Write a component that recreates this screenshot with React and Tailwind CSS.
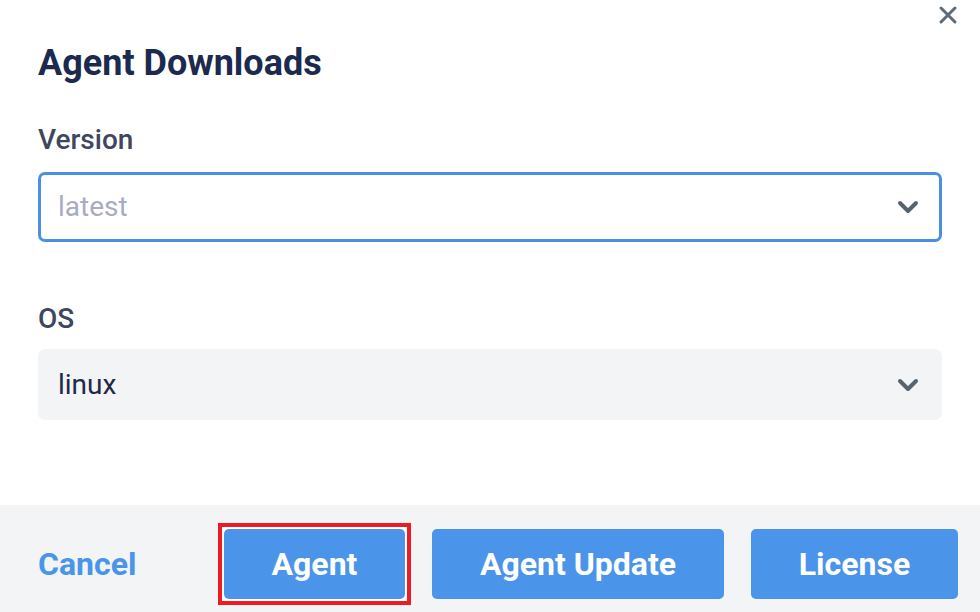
const Chevron = () => (
  <svg width="22" height="14" viewBox="0 0 22 14" className="shrink-0">
    <path d="M3 3 L11 11 L19 3" fill="none" stroke="#56646f" strokeWidth="4" strokeLinecap="round" strokeLinejoin="round" />
  </svg>
);

const buttonClasses =
  "h-[70px] rounded-[5px] bg-[#4a94ea] text-[32px] font-bold text-white";

export default function App() {
  return (
    <div className="relative flex h-[612px] w-[980px] flex-col overflow-hidden bg-white font-['Roboto',sans-serif]">
      <button className="absolute right-[22px] top-[5px] flex h-[20px] w-[20px] items-center justify-center">
        <svg width="20" height="20" viewBox="0 0 20 20">
          <path d="M3 3 L17 17 M17 3 L3 17" stroke="#5b6b78" strokeWidth="3" strokeLinecap="round" />
        </svg>
      </button>

      <div className="flex flex-1 flex-col px-[38px] pt-[43px]">
        <h2 className="text-[36px] font-bold leading-[40px] text-[#1b2a4e]">Agent Downloads</h2>

        <label className="mt-[41px] text-[28px] font-medium leading-[32px] text-[#3f4660]">Version</label>
        <div className="mt-[16px] flex h-[70px] items-center justify-between rounded-[7px] border-[3px] border-[#4a90e2] pl-[17px] pr-[20px]">
          <span className="text-[28px] text-[#a9abc3]">latest</span>
          <Chevron />
        </div>

        <label className="mt-[61px] text-[28px] font-medium leading-[32px] text-[#3f4660]">OS</label>
        <div className="mt-[14px] flex h-[71px] items-center justify-between rounded-[7px] bg-[#f3f4f6] pl-[20px] pr-[23px]">
          <span className="text-[28px] text-[#1e2a4a]">linux</span>
          <Chevron />
        </div>
      </div>

      <div className="flex h-[107px] items-start bg-[#f3f4f6] pl-[38px] pr-[22px] pt-[24px]">
        <button className="mr-auto h-[70px] text-[32px] font-bold text-[#4a94ea]">Cancel</button>
        <div className="flex gap-[27px]">
          <div className="-m-[6px] border-4 border-[#ed1c24] bg-white p-[2px]">
            <button className={`${buttonClasses} block w-[181px]`}>Agent</button>
          </div>
          <button className={`${buttonClasses} w-[292px]`}>Agent Update</button>
          <button className={`${buttonClasses} w-[207px]`}>License</button>
        </div>
      </div>
    </div>
  );
}
